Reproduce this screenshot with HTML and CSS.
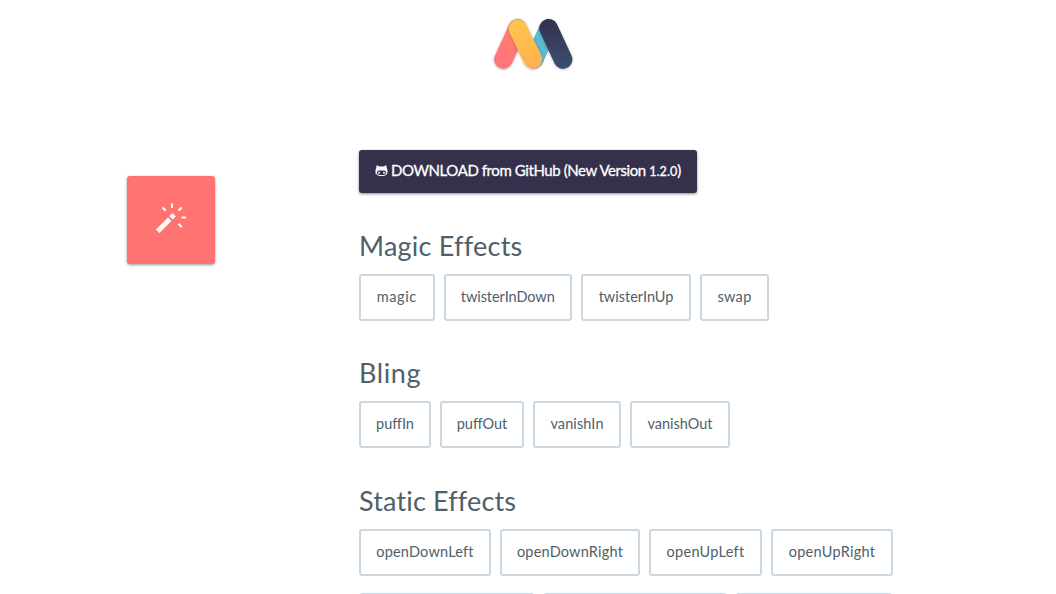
FILE: index.html
```html
<!DOCTYPE html>
<html lang="en">
<head>
<meta charset="utf-8">
<title>Magic Animations</title>
<link rel="stylesheet" href="styles.css">
</head>
<body>
<header class="header">
  <svg class="logo" viewBox="0 0 100 70" width="100" height="70" aria-label="Magic">
    <defs>
      <linearGradient id="red" x1="0" y1="0" x2="0" y2="1"><stop offset="0" stop-color="#ff7f70"/><stop offset="1" stop-color="#ff7478"/></linearGradient>
      <linearGradient id="yellow" x1="0" y1="0" x2="0" y2="1"><stop offset="0" stop-color="#ffc64a"/><stop offset="1" stop-color="#ffb052"/></linearGradient>
      <linearGradient id="navy" x1="0" y1="0" x2="0" y2="1"><stop offset="0" stop-color="#35304e"/><stop offset="1" stop-color="#3a5070"/></linearGradient>
      <filter id="shade" x="-30%" y="-30%" width="160%" height="160%"><feDropShadow dx="0" dy=".6" stdDeviation="1" flood-color="#333" flood-opacity=".4"/></filter>
    </defs>
    <path filter="url(#shade)" fill="url(#red)" d="M26.2 14.4 12 45.4A9.3 9.3 0 0 0 28.8 53.4L43 22.4A9.3 9.3 0 0 0 26.2 14.4Z"/>
    <path fill="#5dbbcf" d="M57 14.4 42.8 45.4A9.3 9.3 0 0 0 59.6 53.4L73.8 22.4A9.3 9.3 0 0 0 57 14.4Z"/>
    <path filter="url(#shade)" fill="url(#navy)" d="M74 14.3 88.500 45.4A9.3 9.3 0 0 1 71.600 53.4L57.200 22.3A9.3 9.3 0 0 1 74 14.3Z"/>
    <path filter="url(#shade)" fill="url(#yellow)" d="M43 14.3 58.300 45.4A9.3 9.3 0 0 1 41.500 53.4L26.3 22.3A9.3 9.3 0 0 1 43 14.3Z"/>
  </svg>
</header>
<div class="layout">
  <aside class="side">
    <div class="demo">
      <svg viewBox="0 0 88 88" width="88" height="88" fill="none" stroke="#fff">
        <path stroke-width="4.8" d="M30.7 55.2 42.7 43.2M44 41.9l3.2-3.2"/>
        <path stroke-width="2" d="M45 27.5v4.5M35.5 31.5l3.3 3.1M54.8 31.5l-3.3 3.1M54.5 41.5h4.5M51.5 47.8l3.3 3.2"/>
      </svg>
    </div>
  </aside>
  <main class="content">
    <a class="download">
      <svg class="cat" viewBox="0 0 13 12" width="13" height="12"><path fill="#fff" fill-rule="evenodd" d="M1.6.5C2.7.5 3.5 1 4.2 1.6h4.6C9.5 1 10.3.5 11.4.5c.4 1 .4 1.7.2 2.5.8 1 1 2 .7 3.5h.7v.6h-.8l-.1.7.8.4-.2.5-.8-.3C11.2 10.5 9.4 11 6.5 11S1.800 10.500 1.100 8.400l-.8.3L.1 8.200l.8-.4-.1-.7H0v-.6h.7C.4 5 .6 4 1.400 3 1.200 2.200 1.200 1.500 1.600.5ZM3.800 5.500C1.200 5.500 1.500 9.900 4.300 9.900h4.400c2.800 0 3.100-4.400.5-4.400Z"/><path fill="#fff" d="M3.300 6.700h1.500v2H3.300zM8.200 6.700h1.500v2H8.200z"/></svg>
      <span class="label">DOWNLOAD from GitHub (New Version <span class="num">1.2.0</span>)</span>
    </a>
    <section class="group">
      <h2 class="title title-magic">Magic Effects</h2>
      <div class="row">
        <a class="effect magic">magic</a><a class="effect twister-down">twisterInDown</a><a class="effect twister-up">twisterInUp</a><a class="effect swap">swap</a>
      </div>
    </section>
    <section class="group">
      <h2 class="title title-bling">Bling</h2>
      <div class="row">
        <a class="effect puff-in">puffIn</a><a class="effect puff-out">puffOut</a><a class="effect vanish-in">vanishIn</a><a class="effect vanish-out">vanishOut</a>
      </div>
    </section>
    <section class="group">
      <h2 class="title title-static">Static Effects</h2>
      <div class="row">
        <a class="effect down-left">openDownLeft</a><a class="effect down-right">openDownRight</a><a class="effect up-left">openUpLeft</a><a class="effect up-right">openUpRight</a>
      </div>
      <div class="row row-next">
        <a class="effect next-a"></a><a class="effect next-b"></a><a class="effect next-c"></a>
      </div>
    </section>
  </main>
</div>
</body>
</html>
```
FILE: styles.css
```css
* { box-sizing: border-box; }
html, body { height: 100%; }
body { margin: 0; background: #fff; color: #4f606a; font-family: Lato, "Open Sans", sans-serif; overflow: hidden; }
.header { height: 149.500px; padding: 10px 0 0 483px; }
.logo { display: block; }
.layout { display: flex; }
.side { width: 359px; flex: none; padding: 26.500px 0 0 126.500px; }
.demo { width: 88.500px; height: 88px; border-radius: 3px; background: #ff7473; box-shadow: 0 1px 3px rgba(0,0,0,.4); }
.demo svg { display: block; }
.content { width: 560px; flex: none; }
.download { display: flex; align-items: center; gap: 3px; width: 338px; height: 43px; padding-left: 16px; border-radius: 3px; background: #35304c; color: #fff; font-size: 15px; line-height: 20px; white-space: nowrap; box-shadow: 0 1px 3px rgba(0,0,0,.45); }
.cat { flex: none; }
.label { letter-spacing: -.42px; -webkit-text-stroke: .3px #fff; }
.num { font-size: 12.500px; letter-spacing: .1px; }
.group { height: 127.500px; }
.content .group:nth-of-type(1) { margin-top: 37px; }
.title { margin: 0; height: 44px; font-size: 27px; line-height: 31px; font-weight: 400; white-space: nowrap; }
.title-magic { letter-spacing: .24px; }
.title-bling { letter-spacing: .6px; line-height: 32px; }
.title-static { letter-spacing: .16px; }
.row { display: flex; gap: 9px; }
.row-next { margin-top: 17px; }
.effect { flex: none; height: 47px; padding-bottom: 1px; border: 2px solid #cbd8e1; border-radius: 3px; font-size: 14.500px; line-height: 42px; text-align: center; white-space: nowrap; }
.magic { width: 75.500px; letter-spacing: .6px; }
.twister-down { width: 128.500px; letter-spacing: -.06px; }
.twister-up { width: 110px; }
.swap { width: 69px; letter-spacing: .3px; }
.puff-in { width: 72px; }
.puff-out { width: 84px; }
.vanish-in { width: 88px; letter-spacing: .1px; }
.vanish-out { width: 100px; }
.down-left { width: 132px; letter-spacing: .2px; }
.down-right { width: 140px; letter-spacing: .2px; }
.up-left { width: 113px; letter-spacing: .3px; }
.up-right { width: 122px; letter-spacing: .3px; }
.next-a { width: 175px; }
.next-b { width: 184px; }
.next-c { width: 156px; }
```
